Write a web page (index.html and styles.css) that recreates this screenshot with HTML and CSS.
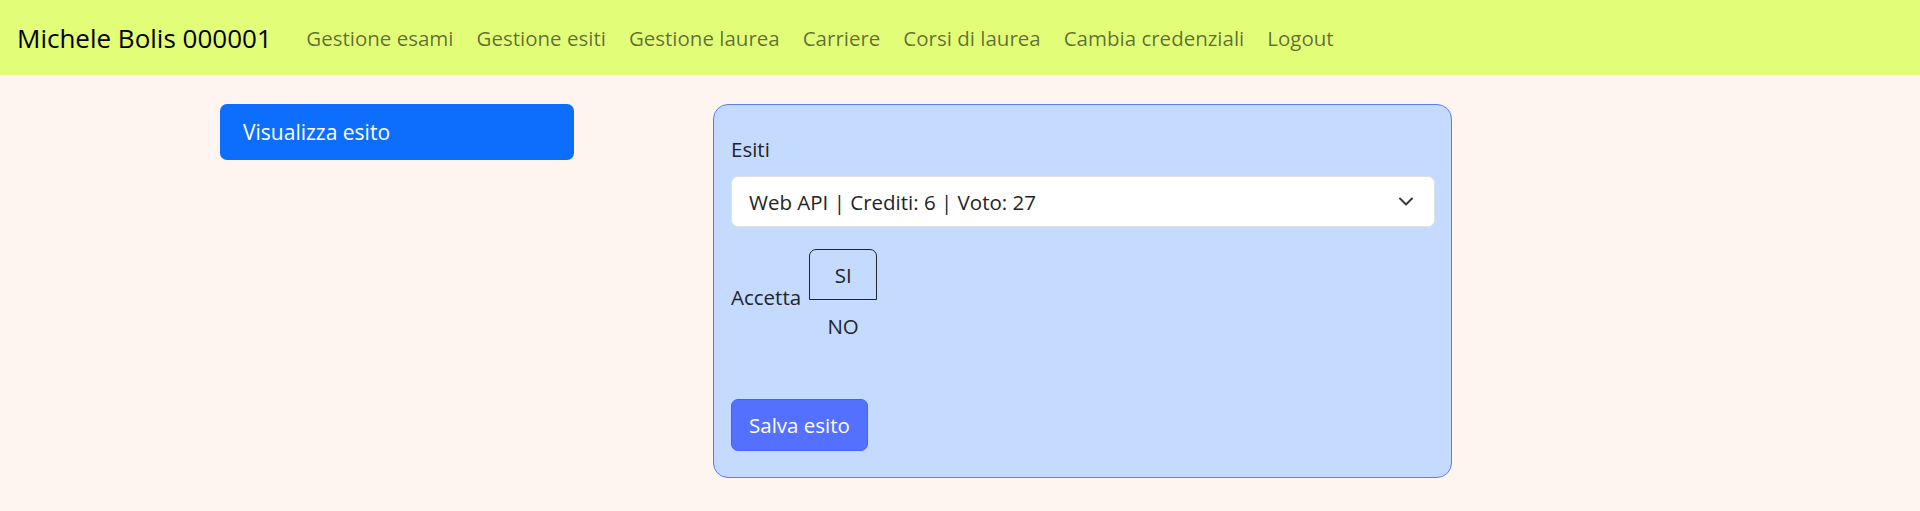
FILE: index.html
```html
<!DOCTYPE html>
<html lang="it">
<head>
<meta charset="utf-8">
<title>Gestione esiti</title>
<link rel="stylesheet" href="styles.css">
</head>
<body>
<nav class="navbar">
  <a class="brand" href="#">Michele Bolis 000001</a>
  <ul class="nav-links">
    <li><a href="#">Gestione esami</a></li>
    <li><a href="#">Gestione esiti</a></li>
    <li><a href="#">Gestione laurea</a></li>
    <li><a href="#">Carriere</a></li>
    <li><a href="#">Corsi di laurea</a></li>
    <li><a href="#">Cambia credenziali</a></li>
    <li><a href="#">Logout</a></li>
  </ul>
</nav>
<main class="content">
  <aside class="side">
    <a class="side-btn" href="#">Visualizza esito</a>
  </aside>
  <section class="card">
    <label class="field-label">Esiti</label>
    <div class="select">
      <span>Web API | Crediti: 6 | Voto: 27</span>
      <svg class="chevron" width="14" height="9" viewBox="0 0 14 9"><path d="M1 1.5 L7 7.5 L13 1.5" fill="none" stroke="#343a40" stroke-width="2" stroke-linecap="round" stroke-linejoin="round"/></svg>
    </div>
    <div class="accept-row">
      <span class="accept-label">Accetta</span>
      <div class="btn-group">
        <button class="opt opt-on">SI</button>
        <button class="opt">NO</button>
      </div>
    </div>
    <button class="save-btn">Salva esito</button>
  </section>
</main>
</body>
</html>
```
FILE: styles.css
```css
* { box-sizing: border-box; }
body {
  margin: 0;
  background: #fff5f0;
  font-family: "Open Sans", "Noto Sans", sans-serif;
  color: #212529;
}
.navbar {
  height: 75px;
  background: #e2fe78;
  display: flex;
  align-items: center;
  padding-left: 17px;
}
.brand {
  font-size: 26px;
  color: #000;
  text-decoration: none;
  margin-right: 23px;
}
.nav-links {
  list-style: none;
  margin: 0;
  padding: 0;
  display: flex;
}
.nav-links a {
  display: block;
  padding: 0 11.5px;
  font-size: 20.5px;
  color: rgba(0, 0, 0, 0.58);
  text-decoration: none;
}
.content {
  display: flex;
  align-items: flex-start;
  padding: 29px 0 0 220px;
  gap: 139px;
}
.side { width: 354px; }
.side-btn {
  display: flex;
  align-items: center;
  height: 56px;
  padding-left: 23px;
  background: #0d6efd;
  color: #fff;
  border-radius: 7px;
  font-size: 21px;
  text-decoration: none;
}
.card {
  width: 739px;
  height: 374px;
  background: #c5daff;
  border: 1px solid #5b7cf6;
  border-radius: 15px;
  padding: 29px 16px 0 17px;
  display: flex;
  flex-direction: column;
  align-items: flex-start;
}
.field-label {
  font-size: 20.5px;
  line-height: 30px;
}
.select {
  margin-top: 12px;
  width: 100%;
  height: 51px;
  background: #fff;
  border: 1px solid #dee2e6;
  border-radius: 7px;
  display: flex;
  align-items: center;
  justify-content: space-between;
  padding: 0 21px 0 17px;
  font-size: 20.5px;
}
.accept-row {
  margin-top: 22px;
  display: flex;
  align-items: center;
  gap: 8px;
}
.accept-label {
  font-size: 20.5px;
  padding-bottom: 7px;
}
.btn-group {
  display: flex;
  flex-direction: column;
}
.opt {
  width: 68px;
  height: 51px;
  background: transparent;
  border: 1px solid transparent;
  font-family: inherit;
  font-size: 20.5px;
  color: #212529;
  padding: 0;
}
.opt-on {
  border-color: #212529;
  border-radius: 7px 7px 0 0;
}
.save-btn {
  margin-top: 48px;
  width: 137px;
  height: 52px;
  background: #5370ff;
  border: 1px solid #3f63f5;
  border-radius: 7px;
  color: #fff;
  font-family: inherit;
  font-size: 20.5px;
  padding: 0;
}
```
